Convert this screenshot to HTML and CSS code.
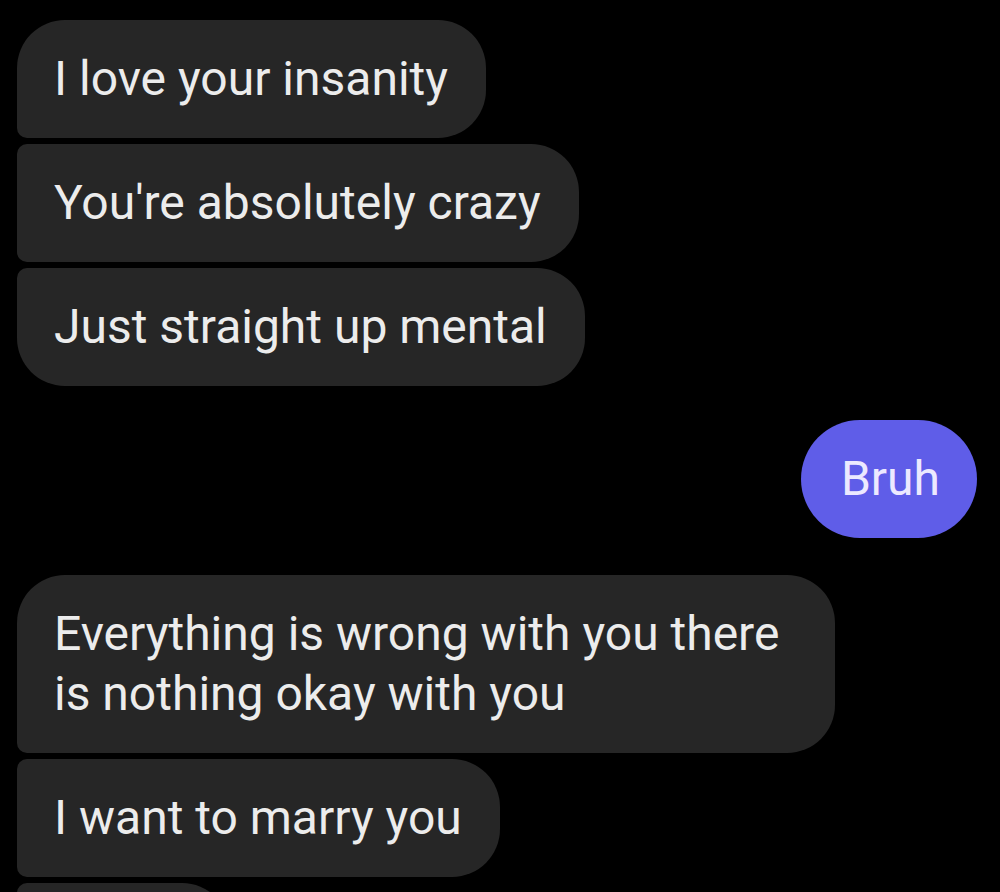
FILE: index.html
```html
<!DOCTYPE html>
<html lang="en">
<head>
<meta charset="utf-8">
<title>Chat</title>
<link rel="stylesheet" href="styles.css">
</head>
<body>
<main class="thread">
  <div class="group">
    <div class="bubble in first">I love your insanity</div>
    <div class="bubble in middle">You're absolutely crazy</div>
    <div class="bubble in last">Just straight up mental</div>
  </div>
  <div class="bubble out">Bruh</div>
  <div class="group">
    <div class="bubble in first wide">Everything is wrong with you there is nothing okay with you</div>
    <div class="bubble in middle">I want to marry you</div>
    <div class="bubble in middle peek" aria-hidden="true"></div>
  </div>
</main>
</body>
</html>
```

FILE: styles.css
```css
html, body {
  margin: 0;
  padding: 0;
  background: #000;
  overflow: hidden;
  height: 100%;
}

.thread {
  display: flex;
  flex-direction: column;
  align-items: flex-start;
  padding: 20px 23px 0 17px;
  font-family: Roboto, "Noto Sans", "Liberation Sans", sans-serif;
  font-size: 48px;
  line-height: 60px;
  color: #ececec;
}

.group {
  display: flex;
  flex-direction: column;
  align-items: flex-start;
  gap: 6px;
}

.bubble {
  box-sizing: border-box;
  padding: 29px 38px 29px 37px;
  background: #262626;
  border-radius: 48px;
  white-space: nowrap;
}

.bubble.first {
  border-bottom-left-radius: 10px;
}

.bubble.middle {
  border-top-left-radius: 10px;
  border-bottom-left-radius: 10px;
}

.bubble.last {
  border-top-left-radius: 10px;
}

.bubble.wide {
  white-space: normal;
  max-width: 818px;
}

.bubble.peek {
  width: 213px;
  height: 118px;
}

.bubble.out {
  align-self: flex-end;
  margin: 34px 0 37px;
  padding: 29px 37px 29px 40px;
  background: #5f5de8;
  color: #ece9ff;
  border-radius: 59px;
}
```
